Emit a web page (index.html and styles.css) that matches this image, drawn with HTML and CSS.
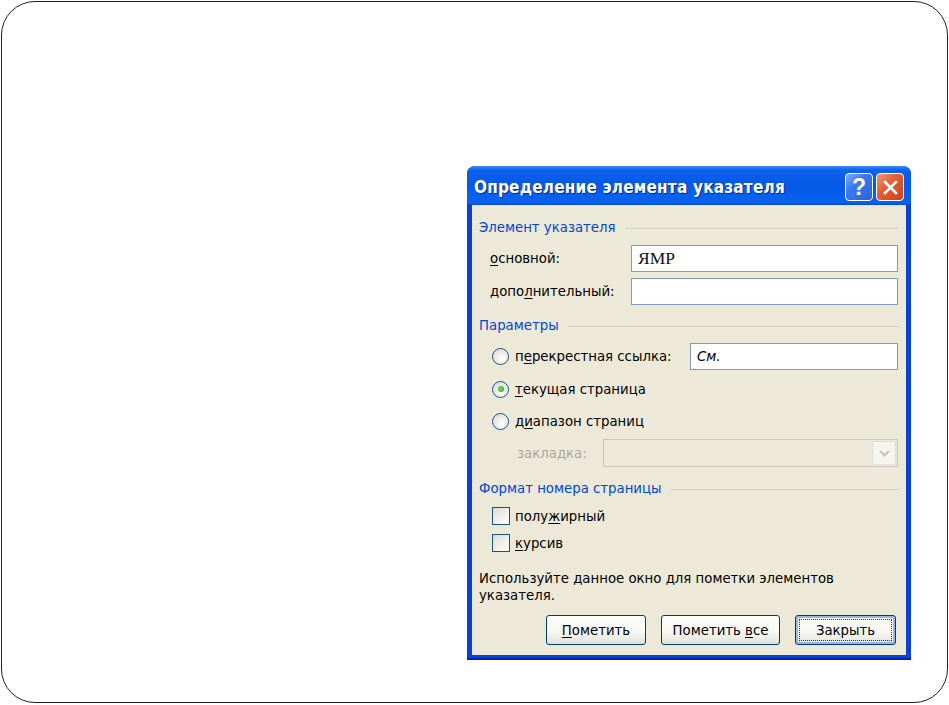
FILE: index.html
```html
<!DOCTYPE html>
<html>
<head>
<meta charset="utf-8">
<link rel="stylesheet" href="styles.css">
</head>
<body>
<div class="slide">
  <div class="dlg">
    <div class="titlebar">
      <span class="title">Определение элемента указателя</span>
      <span class="tbtn help">?</span>
      <span class="tbtn close">
        <svg width="17" height="17" viewBox="0 0 17 17"><path d="M3 3 L14 14 M14 3 L3 14" stroke="#fff" stroke-width="2.6" stroke-linecap="square"/></svg>
      </span>
    </div>
    <div class="client">
      <div class="group"><span>Элемент указателя</span><i class="rule"></i></div>
      <div class="row r1"><span class="lbl"><u>о</u>сновной:</span><div class="input serif">ЯМР</div></div>
      <div class="row r2"><span class="lbl">допо<u>л</u>нительный:</span><div class="input"></div></div>
      <div class="group g2"><span>Параметры</span><i class="rule"></i></div>
      <div class="row r3"><span class="radio"></span><span class="rlbl">п<u>е</u>рекрестная ссылка:</span><div class="input it">См.</div></div>
      <div class="row r4"><span class="radio on"></span><span class="rlbl"><u>т</u>екущая страница</span></div>
      <div class="row r5"><span class="radio"></span><span class="rlbl">д<u>и</u>апазон страниц</span></div>
      <div class="row r6"><span class="dis">закладка:</span><div class="combo"><span class="drop"><svg width="11" height="7" viewBox="0 0 11 7"><path d="M1 1 L5.5 5.5 L10 1" fill="none" stroke="#C4C3BC" stroke-width="2"/></svg></span></div></div>
      <div class="group g3"><span>Формат номера страницы</span><i class="rule"></i></div>
      <div class="row r7"><span class="check"></span><span class="clbl">полу<u>ж</u>ирный</span></div>
      <div class="row r8"><span class="check"></span><span class="clbl"><u>к</u>урсив</span></div>
      <p class="note">Используйте данное окно для пометки элементов<br>указателя.</p>
      <div class="buttons">
        <span class="btn b1"><span><u>П</u>ометить</span></span>
        <span class="btn b2"><span>Пометить <u>в</u>се</span></span>
        <span class="btn b3 def"><span class="focus">Закрыть</span></span>
      </div>
    </div>
  </div>
</div>
</body>
</html>
```
FILE: styles.css
```css
html, body { margin: 0; padding: 0; background: #fff; }
body { width: 949px; height: 705px; overflow: hidden; font-family: "DejaVu Sans", sans-serif; }

.slide {
  margin: 1px 0 0 1px;
  width: 947px;
  height: 702px;
  border: 1px solid #222;
  border-radius: 34px;
  box-sizing: border-box;
  padding: 164px 0 0 465px;
}

.dlg {
  width: 444px;
  height: 494px;
  background: #0841D8;
  border-radius: 8px 8px 0 0;
  display: flex;
  flex-direction: column;
  box-shadow: inset 0 -2px 0 #0020B8;
}

.titlebar {
  height: 39px;
  display: flex;
  align-items: center;
  padding: 0 7px 0 7px;
  border-radius: 8px 8px 0 0;
  background: linear-gradient(to bottom, #3C8CF7 0%, #0E62EC 10%, #0559E6 45%, #0761EF 85%, #0B5FE8 95%, #0847D6 100%);
}
.title {
  color: #fff;
  font-family: "DejaVu Sans Condensed", "DejaVu Sans", sans-serif;
  font-weight: bold;
  font-size: 17px;
  letter-spacing: 0.2px;
  flex: 1;
  padding-top: 2px;
  text-shadow: 1px 1px 0 #0A2A90;
}
.tbtn {
  width: 28px;
  height: 28px;
  border: 1px solid #fff;
  border-radius: 4px;
  display: flex;
  align-items: center;
  justify-content: center;
  margin-left: 3px;
  margin-top: 3px;
  box-sizing: border-box;
}
.help {
  background: linear-gradient(135deg, #7EA9F7 0%, #3A78F0 40%, #2A62E0 100%);
  color: #fff;
  font-family: "Liberation Sans", sans-serif;
  font-weight: bold;
  font-size: 23px;
}
.close {
  background: linear-gradient(135deg, #F2987A 0%, #E4603A 40%, #CC4016 100%);
}

.client {
  flex: 1;
  margin: 0 5px 5px 5px;
  background: #ECE9D8;
  padding: 11px 8px 0 7px;
  font-size: 13.3px;
  color: #000;
  display: flex;
  flex-direction: column;
}
u { text-decoration-thickness: 1px; text-underline-offset: 2px; }

.group {
  height: 22px;
  display: flex;
  align-items: center;
  color: #0046D5;
}
.rule { flex: 1; height: 1px; background: #D0D0BF; margin-left: 9px; margin-top: 2px; }
.g2 { margin-top: 9px; }
.g3 { margin-top: 10px; }

.row { display: flex; align-items: center; }
.lbl { width: 141px; padding-left: 11px; }
.r1 { height: 28px; margin-top: 6px; }
.r2 { height: 28px; margin-top: 5px; }
.r3 { height: 28px; margin-top: 6px; padding-left: 13px; }
.r4 { height: 28px; margin-top: 5px; padding-left: 13px; }
.r5 { height: 28px; margin-top: 4px; padding-left: 13px; }
.r6 { height: 28px; margin-top: 4px; padding-left: 38px; }
.r7 { height: 24px; margin-top: 5px; padding-left: 13px; }
.r8 { height: 24px; margin-top: 3px; padding-left: 13px; }
.r3 .rlbl { width: 175px; }

.input {
  flex: 1;
  height: 27px;
  box-sizing: border-box;
  background: #fff;
  border: 1px solid #7F9DB9;
  display: flex;
  align-items: center;
  padding-left: 6px;
}
.serif { font-family: "Liberation Serif", serif; font-size: 17.5px; color: #111; }
.it { font-style: italic; }

.radio {
  width: 17px;
  height: 17px;
  border-radius: 50%;
  border: 1px solid #1C5180;
  background: radial-gradient(circle at 65% 65%, #fff 0%, #F0EFE8 40%, #D6D4CA 100%);
  box-sizing: border-box;
  margin-right: 6px;
  position: relative;
}
.radio.on::after {
  content: "";
  position: absolute;
  left: 4.5px; top: 4.5px;
  width: 6px; height: 6px;
  border-radius: 50%;
  background: radial-gradient(circle at 40% 40%, #6EE26E, #21A121);
}
.check {
  width: 18px;
  height: 18px;
  border: 1px solid #1C5180;
  background: linear-gradient(135deg, #DCDBD3 0%, #F2F1EB 60%, #fff 100%);
  box-sizing: border-box;
  margin-right: 5px;
}

.dis { color: #ACA899; width: 86px; }
.combo {
  flex: 1;
  height: 28px;
  box-sizing: border-box;
  border: 1px solid #C9C7BA;
  background: #ECE9D8;
  display: flex;
  justify-content: flex-end;
  padding: 1px;
}
.drop {
  width: 22px;
  border: 1px solid #E2E0D6;
  border-radius: 2px;
  background: #F5F4EF;
  display: flex;
  align-items: center;
  justify-content: center;
}

.note { margin: 15px 0 0 0; line-height: 17px; }

.buttons {
  display: flex;
  justify-content: flex-end;
  gap: 15px;
  margin-top: 11px;
  padding-right: 2px;
}
.btn {
  height: 30px;
  box-sizing: border-box;
  border: 1px solid #003C74;
  border-radius: 3px;
  background: linear-gradient(to bottom, #FFFFFF 0%, #F6F6F2 60%, #E3E1D6 100%);
  display: flex;
  align-items: center;
  justify-content: center;
}
.b1 { width: 100px; }
.b2 { width: 119px; }
.b3 { width: 101px; }
.def { box-shadow: inset 0 0 0 2px #93B7F1; padding: 3px; }
.focus {
  flex: 1;
  align-self: stretch;
  border: 1px dotted #333;
  display: flex;
  align-items: center;
  justify-content: center;
}
```
